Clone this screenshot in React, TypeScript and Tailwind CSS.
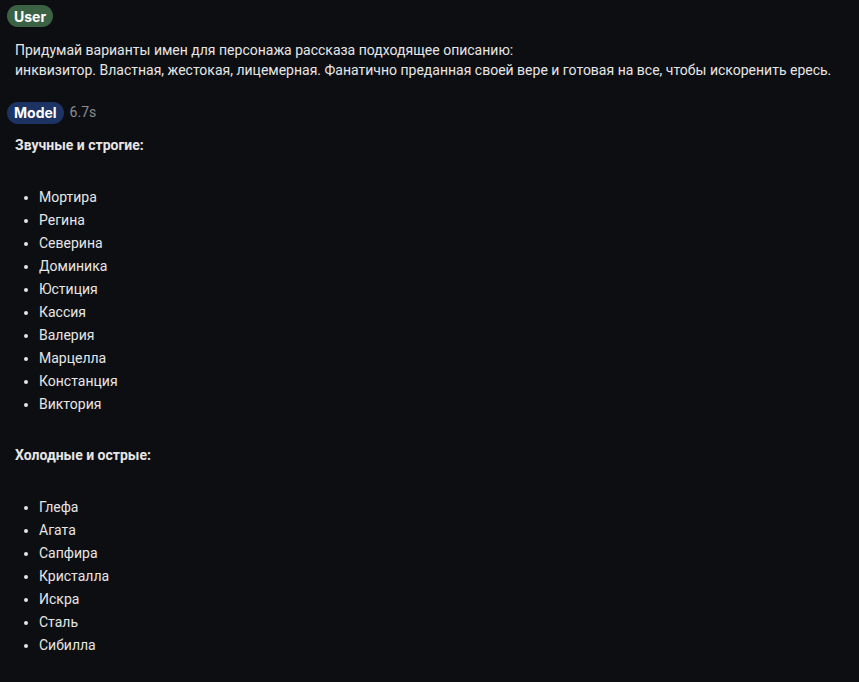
const strict = ["Мортира", "Регина", "Северина", "Доминика", "Юстиция", "Кассия", "Валерия", "Марцелла", "Констанция", "Виктория"];
const cold = ["Глефа", "Агата", "Сапфира", "Кристалла", "Искра", "Сталь", "Сибилла"];

function Badge({ label, color }: { label: string; color: string }) {
  return (
    <span
      className={`inline-flex h-[22px] items-center rounded-full px-[7px] text-[14px] font-bold text-white ${color}`}
      style={{ fontFamily: "Inter, Roboto, sans-serif" }}
    >
      {label}
    </span>
  );
}

function NameList({ names }: { names: string[] }) {
  return (
    <ul className="mt-[29px] list-disc pl-[39px] marker:text-[#e4e4e4]">
      {names.map((n) => (
        <li key={n} className="h-[23px] leading-[23px] pl-0">
          {n}
        </li>
      ))}
    </ul>
  );
}

export default function App() {
  return (
    <div className="min-h-[682px] w-full bg-[#0d0e12] text-[14px] text-[#e6e6e6]" style={{ fontFamily: "Roboto, 'Noto Sans', sans-serif" }}>
      <div className="px-[7px] pt-[5px]">
        <Badge label="User" color="bg-[#3b6343]" />
      </div>
      <div className="px-[15px] pt-[12px] leading-[20px]">
        <p>Придумай варианты имен для персонажа рассказа подходящее описанию:</p>
        <p>инквизитор. Властная, жестокая, лицемерная. Фанатично преданная своей вере и готовая на все, чтобы искоренить ересь.</p>
      </div>
      <div className="flex items-center gap-[6px] px-[7px] pt-[22px]">
        <Badge label="Model" color="bg-[#1c3363]" />
        <span className="text-[#8b8d93]">6.7s</span>
      </div>
      <div className="pt-[10px]">
        <p className="px-[15px] font-bold leading-[23px]">Звучные и строгие:</p>
        <NameList names={strict} />
        <p className="mt-[28px] px-[15px] font-bold leading-[23px]">Холодные и острые:</p>
        <NameList names={cold} />
      </div>
    </div>
  );
}
